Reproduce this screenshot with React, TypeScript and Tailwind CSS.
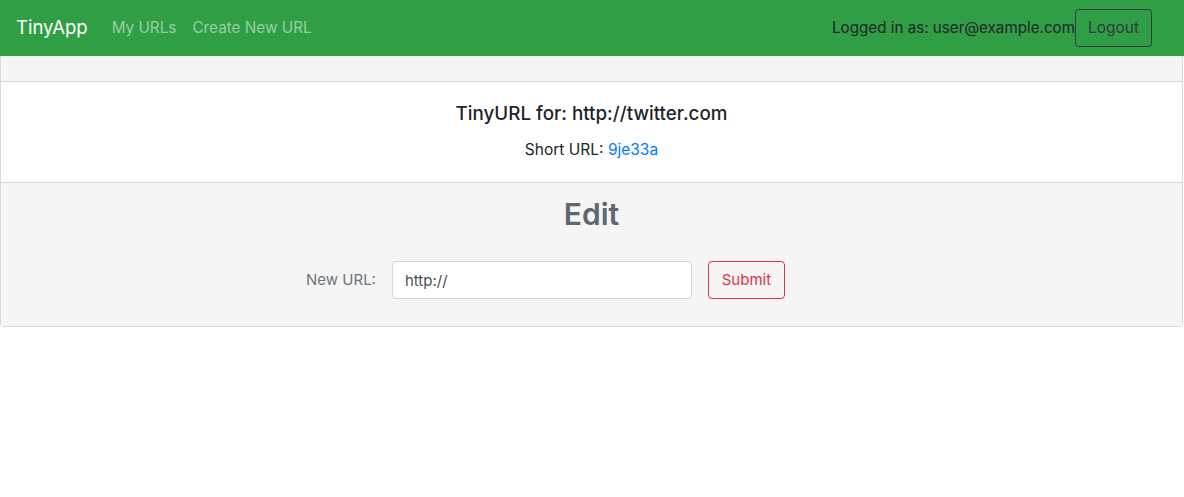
export default function App() {
  return (
    <div className="min-h-screen bg-white font-['Inter',_sans-serif] text-[#212529]">
      <nav className="flex h-14 items-center bg-[#2f9e44] pl-4 pr-8">
        <a className="mr-6 text-[18.5px] text-white">TinyApp</a>
        <a className="mr-4 text-[15.3px] text-white/50">My URLs</a>
        <a className="text-[15.3px] text-white/50">Create New URL</a>
        <div className="ml-auto flex items-center">
          <span className="text-[15.2px] text-[#212529]">Logged in as: user@example.com</span>
          <button className="h-[38px] w-[77px] rounded border border-[#343a40] text-[15.5px] text-[#343a40]">
            Logout
          </button>
        </div>
      </nav>

      <div className="mr-px rounded-b border border-t-0 border-[#d9d9d9]">
        <div className="h-[26px] border-b border-[#d9d9d9] bg-[#f5f5f5]" />
        <div className="flex flex-col items-center px-5 py-5">
          <h5 className="mb-3 text-[18.8px] leading-6 font-medium">TinyURL for: http://twitter.com</h5>
          <p className="text-[15.5px] leading-6">
            Short URL: <a className="text-[#007bff]">9je33a</a>
          </p>
        </div>
        <div className="border-t border-[#d9d9d9] bg-[#f5f5f5] px-5 pt-3 pb-[27px]">
          <h2 className="text-center text-[30px] leading-[38px] font-semibold text-[#5f6770]">Edit</h2>
          <form className="mt-7 flex items-center justify-center pr-[92px]">
            <label className="mr-4 text-[15px] text-[#6c757d]">New URL:</label>
            <input
              defaultValue="http://"
              className="h-[38px] w-[300px] rounded border border-[#ced4da] bg-white px-3 text-[15px] text-[#495057] outline-none"
            />
            <button
              type="button"
              className="ml-4 h-[38px] w-[77px] rounded border border-[#dc3545] text-[15px] text-[#dc3545]"
            >
              Submit
            </button>
          </form>
        </div>
      </div>
    </div>
  );
}
